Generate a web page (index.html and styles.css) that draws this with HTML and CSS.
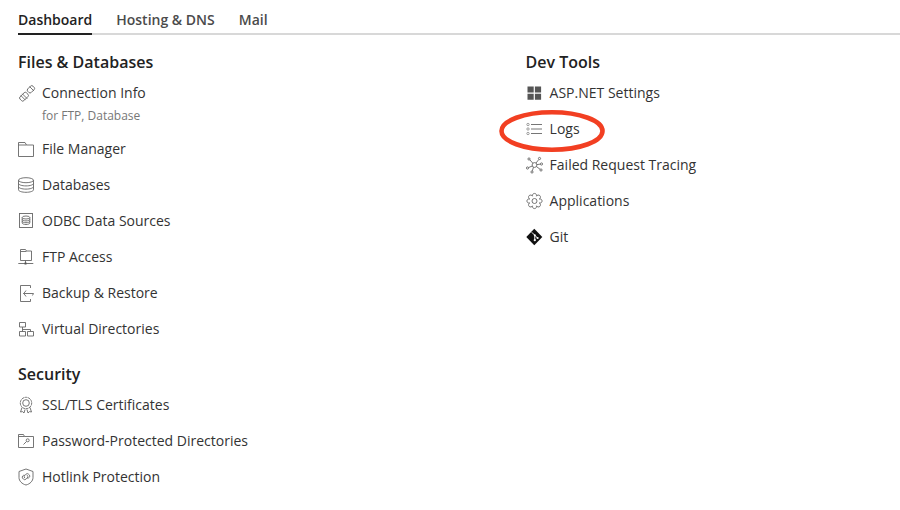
FILE: index.html
```html
<!DOCTYPE html>
<html lang="en">
<head>
<meta charset="utf-8">
<title>Dashboard</title>
<link rel="stylesheet" href="styles.css">
</head>
<body>
<div class="page">
  <nav class="tabs">
    <a class="tab active">Dashboard</a>
    <a class="tab">Hosting &amp; DNS</a>
    <a class="tab">Mail</a>
  </nav>
  <div class="columns">
    <div class="col">
      <h2 class="heading">Files &amp; Databases</h2>
      <div class="item item-sub">
        <svg class="ico" viewBox="0 0 18 18"><g class="ln"><rect x="1.500" y="10" width="9" height="5.400" rx="1.600" transform="rotate(-45 6 12.700)"/><path d="M4.300 9.800l5 5M2.800 11.500l4.600 4.600"/><rect x="9.200" y="2.800" width="7.400" height="5" rx="1.800" transform="rotate(-45 12.900 5.300)"/><path d="M11.500 2.500l4.500 4.500"/></g></svg>
        <div><div class="label">Connection Info</div><div class="sub">for FTP, Database</div></div>
      </div>
      <div class="item">
        <svg class="ico" viewBox="0 0 18 18"><path class="ln" d="M.5 16.500v-14h6.500l1.500 2.500h7v11.500zM.5 5h8"/></svg>
        <span class="label">File Manager</span>
      </div>
      <div class="item">
        <svg class="ico" viewBox="0 0 18 18"><g class="ln"><ellipse cx="8" cy="4.200" rx="7.500" ry="2.500"/><path d="M.5 4.200v9.600c0 1.400 3.400 2.500 7.500 2.500s7.500-1.100 7.500-2.500V4.200M.5 7.400c0 1.400 3.400 2.500 7.500 2.500s7.500-1.100 7.500-2.500M.5 10.600c0 1.400 3.400 2.500 7.500 2.500s7.500-1.100 7.500-2.500"/></g></svg>
        <span class="label">Databases</span>
      </div>
      <div class="item">
        <svg class="ico" viewBox="0 0 18 18"><g class="ln"><rect x="1.500" y="1.500" width="13" height="14"/><ellipse cx="8" cy="5.500" rx="3.800" ry="1.500"/><path d="M4.200 5.500v5.500c0 .8 1.700 1.500 3.800 1.500s3.800-.7 3.800-1.500V5.500M4.200 7.400c0 .8 1.700 1.500 3.800 1.500s3.800-.7 3.800-1.500M4.200 9.200c0 .8 1.700 1.500 3.800 1.500s3.800-.7 3.800-1.500"/></g></svg>
        <span class="label">ODBC Data Sources</span>
      </div>
      <div class="item">
        <svg class="ico" viewBox="0 0 18 18"><path class="ln" d="M2.500 12.500v-11h5l1 1.500h5v9.500zM2.500 3.500h6M7.500 12.500v3M.3 15.500h15"/><rect class="fl" x="6.500" y="14.500" width="2" height="2"/></svg>
        <span class="label">FTP Access</span>
      </div>
      <div class="item">
        <svg class="ico" viewBox="0 0 18 18"><path class="ln" d="M12.500 4V1.500h-10v16h10V15M15.500 9.500H5.500c1-.8 2-2 2.500-3M5.500 9.500c1 .8 2 2 2.500 3M15.500 9.500c-.5 1-.5 1.500-1.500 2"/></svg>
        <span class="label">Backup &amp; Restore</span>
      </div>
      <div class="item">
        <svg class="ico" viewBox="0 0 18 18"><path class="ln" d="M1.500 2.500h6v4.500h-6zM1.500 11.500h6v4.500h-6zM9.500 11.500h6v4.500h-6zM4.500 7v4.500M4.500 9.500h8v2"/></svg>
        <span class="label">Virtual Directories</span>
      </div>
      <h2 class="heading heading-next">Security</h2>
      <div class="item">
        <svg class="ico" viewBox="0 0 18 18"><g class="ln"><circle cx="8" cy="7" r="5.700" stroke-dasharray="2.600 .5"/><circle cx="8" cy="7" r="3.300"/><path d="M4 11.500L2.500 16l2-.4L6 17l1-3.500M12 11.500l1.500 4.500-2-.4L10 17l-1-3.500"/></g></svg>
        <span class="label">SSL/TLS Certificates</span>
      </div>
      <div class="item">
        <svg class="ico" viewBox="0 0 18 18"><path class="ln" d="M.5 15.500v-13h5l1 2h9v11zM.5 4.500h6M5.500 12.500l3-3"/><circle class="ln" cx="9.700" cy="8.300" r="1.500"/></svg>
        <span class="label">Password-Protected Directories</span>
      </div>
      <div class="item">
        <svg class="ico" viewBox="0 0 18 18"><g class="ln"><path d="M8 1l7 2.500v6c0 3.500-3 6.500-7 7.500-4-1-7-4-7-7.500v-6z"/><path d="M6.800 7.300a2 2 0 0 0-2.300 2.900l.8.800a2 2 0 0 0 2.900 0l1-1a2 2 0 0 0 0-2.800"/><path d="M9.200 10a2 2 0 0 0 2.300-2.900l-.8-.8a2 2 0 0 0-2.900 0l-1 1a2 2 0 0 0 0 2.800"/></g></svg>
        <span class="label">Hotlink Protection</span>
      </div>
    </div>
    <div class="col">
      <h2 class="heading">Dev Tools</h2>
      <div class="item">
        <svg class="ico" viewBox="0 0 18 18"><path class="fl" d="M1.500 2.500h6.200v6H1.500zM8.900 2.500h6.200v6H8.900zM1.500 9.700h6.200v6H1.500zM8.900 9.700h6.200v6H8.900z"/></svg>
        <span class="label">ASP.NET Settings</span>
      </div>
      <div class="item">
        <svg class="ico" viewBox="0 0 18 18"><g class="ln-thin"><circle cx="2" cy="4.500" r="1.200"/><circle cx="2" cy="9" r="1.200"/><circle cx="2" cy="13.500" r="1.200"/></g><path class="ln" d="M5 4.500h11M5 9h11M5 13.500h11"/></svg>
        <span class="label">Logs</span>
        <svg class="ring" viewBox="0 0 106 42"><ellipse cx="53" cy="21" rx="50.500" ry="18.700"/></svg>
      </div>
      <div class="item">
        <svg class="ico" viewBox="0 0 18 18"><g class="ln"><circle cx="8.500" cy="9" r="2.400"/><circle cx="3" cy="3" r="1.100"/><circle cx="13.500" cy="2.500" r="1.100"/><circle cx="1.500" cy="12" r="1.100"/><circle cx="6" cy="16" r="1.100"/><circle cx="15" cy="14" r="1.100"/><circle cx="15.500" cy="8" r="1.100"/><path d="M3.800 3.800l3 3.400M12.800 3.500l-2.800 3.500M2.600 11.500l3.700-1.500M7.500 11.200l-1.200 3.700M10.400 10.500l3.700 2.800M10.900 8.600l3.500-.5"/></g></svg>
        <span class="label">Failed Request Tracing</span>
      </div>
      <div class="item">
        <svg class="ico" viewBox="0 0 18 18"><g class="ln" transform="translate(0 .5)"><circle cx="8.500" cy="8.500" r="2.500"/><path d="M13.300 10.490A2.100 2.100 0 1 1 10.490 13.300A2.100 2.100 0 1 1 6.510 13.300A2.100 2.100 0 1 1 3.700 10.490A2.100 2.100 0 1 1 3.700 6.510A2.100 2.100 0 1 1 6.510 3.700A2.100 2.100 0 1 1 10.490 3.700A2.100 2.100 0 1 1 13.300 6.510A2.100 2.100 0 1 1 13.300 10.490z"/></g></svg>
        <span class="label">Applications</span>
      </div>
      <div class="item">
        <svg class="ico" viewBox="0 0 18 18"><path class="git" d="M8.300.8l8 8.200-8 8.200L.3 9z"/><path class="git-ln" d="M5.800 4.300l3 3M8.800 7.300v4.700M8.800 7.300l2.700 2.700"/><circle class="git-dot" cx="8.800" cy="7.200" r="1"/><circle class="git-dot" cx="8.800" cy="12.200" r="1.100"/><circle class="git-dot" cx="11.600" cy="10" r="1.100"/></svg>
        <span class="label">Git</span>
      </div>
    </div>
  </div>
</div>
</body>
</html>
```

FILE: styles.css
```css
* { box-sizing: border-box; }
html, body { margin: 0; padding: 0; background: #fff; }
body { font-family: "Open Sans", sans-serif; color: #222; width: 900px; height: 510px; overflow: hidden; }
.page { padding: 0 0 0 18px; }
.tabs { display: flex; gap: 24px; height: 35px; border-bottom: 2px solid #d8d8d8; padding-top: 10px; }
.tab { font-size: 14px; line-height: 20px; font-weight: 600; color: #4b4b4b; height: 25px; }
.tab.active { color: #222; border-bottom: 2px solid #222; }
.columns { display: grid; grid-template-columns: 507.6px 1fr; }
.heading { font-size: 16px; line-height: 22px; font-weight: 600; margin: 16px 0 4px; color: #222; }
.heading-next { margin-top: 14px; margin-bottom: 4px; }
.item { display: flex; align-items: flex-start; gap: 6px; height: 36px; padding-top: 6px; position: relative; }
.item-sub { height: 56px; }
.ico { width: 18px; height: 18px; flex: none; margin-top: 1px; }
.ln { fill: none; stroke: #666; stroke-width: .9; }
.ln-thin { fill: none; stroke: #666; stroke-width: .6; }
.fl { fill: #555; }
.git { fill: #111; }
.git-ln { fill: none; stroke: #fff; stroke-width: 1; }
.git-dot { fill: #fff; }
.label { font-size: 14px; line-height: 20px; color: #333; }
.sub { font-size: 12px; line-height: 16px; color: #777; margin-top: 5px; }
.ring { position: absolute; left: -26.6px; top: -3px; width: 106px; height: 42px; fill: none; stroke: #f23f22; stroke-width: 4.600; }
```
